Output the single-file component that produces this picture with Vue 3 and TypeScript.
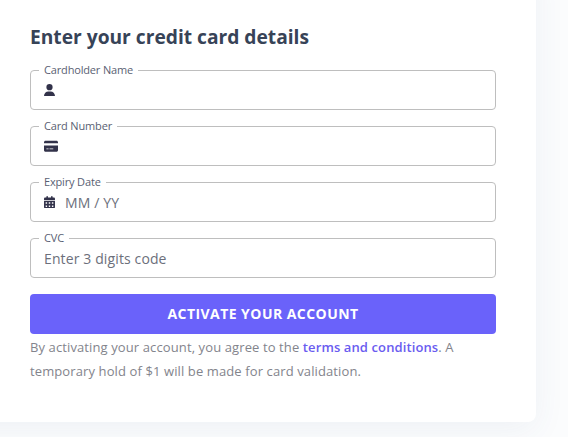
<script setup lang="ts">
import { ref } from 'vue'

interface Field {
  id: string
  label: string
  placeholder: string
  icon?: { viewBox: string; width: number; path: string }
}

const fields: Field[] = [
  {
    id: 'name',
    label: 'Cardholder Name',
    placeholder: '',
    icon: {
      viewBox: '0 0 448 512',
      width: 11,
      path: 'M224 256A128 128 0 1 0 224 0a128 128 0 0 0 0 256zm-45.700 48C79.800 304 0 383.800 0 482.300 0 498.700 13.300 512 29.700 512h388.600c16.400 0 29.700-13.300 29.700-29.700C448 383.800 368.200 304 269.700 304z',
    },
  },
  {
    id: 'number',
    label: 'Card Number',
    placeholder: '',
    icon: {
      viewBox: '0 0 576 512',
      width: 14,
      path: 'M64 32C28.700 32 0 60.700 0 96v32h576V96c0-35.300-28.700-64-64-64zM576 224H0v192c0 35.300 28.700 64 64 64h448c35.300 0 64-28.700 64-64zM112 352h64c8.800 0 16 7.200 16 16s-7.200 16-16 16h-64c-8.800 0-16-7.200-16-16s7.200-16 16-16zm112 16c0-8.800 7.200-16 16-16h128c8.800 0 16 7.200 16 16s-7.200 16-16 16H240c-8.800 0-16-7.200-16-16z',
    },
  },
  {
    id: 'expiry',
    label: 'Expiry Date',
    placeholder: 'MM / YY',
    icon: {
      viewBox: '0 0 448 512',
      width: 11,
      path: 'M128 0c17.700 0 32 14.300 32 32v32h128V32c0-17.700 14.300-32 32-32s32 14.300 32 32v32h48c26.500 0 48 21.500 48 48v48H0v-48c0-26.500 21.500-48 48-48h48V32c0-17.700 14.300-32 32-32zM0 192h448v272c0 26.500-21.500 48-48 48H48c-26.500 0-48-21.500-48-48zm64 80v32c0 8.800 7.200 16 16 16h32c8.800 0 16-7.200 16-16v-32c0-8.800-7.200-16-16-16H80c-8.800 0-16 7.200-16 16zm128 0v32c0 8.800 7.200 16 16 16h32c8.800 0 16-7.200 16-16v-32c0-8.800-7.200-16-16-16h-32c-8.800 0-16 7.200-16 16zm144-16c-8.800 0-16 7.200-16 16v32c0 8.800 7.200 16 16 16h32c8.800 0 16-7.200 16-16v-32c0-8.800-7.200-16-16-16zM64 400v32c0 8.800 7.200 16 16 16h32c8.800 0 16-7.200 16-16v-32c0-8.800-7.200-16-16-16H80c-8.800 0-16 7.200-16 16zm144-16c-8.800 0-16 7.200-16 16v32c0 8.800 7.200 16 16 16h32c8.800 0 16-7.200 16-16v-32c0-8.800-7.200-16-16-16zm112 16v32c0 8.800 7.200 16 16 16h32c8.800 0 16-7.200 16-16v-32c0-8.800-7.200-16-16-16h-32c-8.800 0-16 7.200-16 16z',
    },
  },
  { id: 'cvc', label: 'CVC', placeholder: 'Enter 3 digits code' },
]

const values = ref<Record<string, string>>({ name: '', number: '', expiry: '', cvc: '' })
</script>

<template>
  <main class="page">
    <form class="card" @submit.prevent>
      <h1 class="title">Enter your credit card details</h1>
      <div class="fields">
        <div v-for="f in fields" :key="f.id" class="field">
          <label class="label" :for="f.id">{{ f.label }}</label>
          <svg
            v-if="f.icon"
            class="icon"
            :viewBox="f.icon.viewBox"
            :width="f.icon.width"
            height="12.5"
            aria-hidden="true"
          >
            <path :d="f.icon.path" />
          </svg>
          <input :id="f.id" v-model="values[f.id]" class="input" type="text" :placeholder="f.placeholder" />
        </div>
      </div>
      <button class="submit" type="submit">ACTIVATE YOUR ACCOUNT</button>
      <p class="terms">
        By activating your account, you agree to the <a class="link">terms and conditions</a>. A
        temporary hold of $1 will be made for card validation.
      </p>
    </form>
  </main>
</template>

<style>
body {
  background: #fbfcfd;
  overflow: hidden;
}
</style>

<style scoped>
.page {
  height: 437px;
  overflow: hidden;
  font-family: 'Open Sans', sans-serif;
}
.card {
  box-sizing: border-box;
  width: 576px;
  height: 462px;
  margin: -40px 0 0 -40px;
  padding: 64px 40px 0 70px;
  background: #fff;
  border-radius: 8px;
  box-shadow: 0 8px 32px rgba(60, 90, 130, 0.065);
}
.title {
  margin: 0 0 20px;
  font-size: 19.2px;
  line-height: 26px;
  font-weight: 700;
  color: #374357;
}
.fields {
  display: grid;
  gap: 16px;
}
.field {
  position: relative;
  box-sizing: border-box;
  display: flex;
  align-items: center;
  gap: 10px;
  height: 40px;
  padding: 0 13px;
  border: 1px solid #bebebe;
  border-radius: 4px;
}
.label {
  position: absolute;
  top: -9px;
  left: 8px;
  padding: 0 5px;
  background: #fff;
  font-size: 11px;
  line-height: 16px;
  letter-spacing: -0.16px;
  color: #5a5f73;
}
.icon {
  flex: none;
  fill: #32324a;
}
.input {
  flex: 1;
  min-width: 0;
  padding: 2px 0 0;
  border: 0;
  outline: 0;
  background: transparent;
  font: 14px/20px 'Open Sans', sans-serif;
  letter-spacing: 0.12px;
  color: #32324a;
}
.input::placeholder {
  color: #6c6f7b;
  opacity: 1;
}
.submit {
  display: block;
  width: 100%;
  height: 40px;
  margin: 16px 0 0;
  padding: 0;
  border: 0;
  border-radius: 4px;
  background: #6a62fa;
  color: #fff;
  font: 700 14px/20px 'Open Sans', sans-serif;
  letter-spacing: 0.45px;
}
.terms {
  margin: 1px 0 0;
  font-size: 13px;
  line-height: 24px;
  letter-spacing: 0.11px;
  color: #83848c;
}
.link {
  font-weight: 600;
  color: #6a5cf0;
}
</style>
